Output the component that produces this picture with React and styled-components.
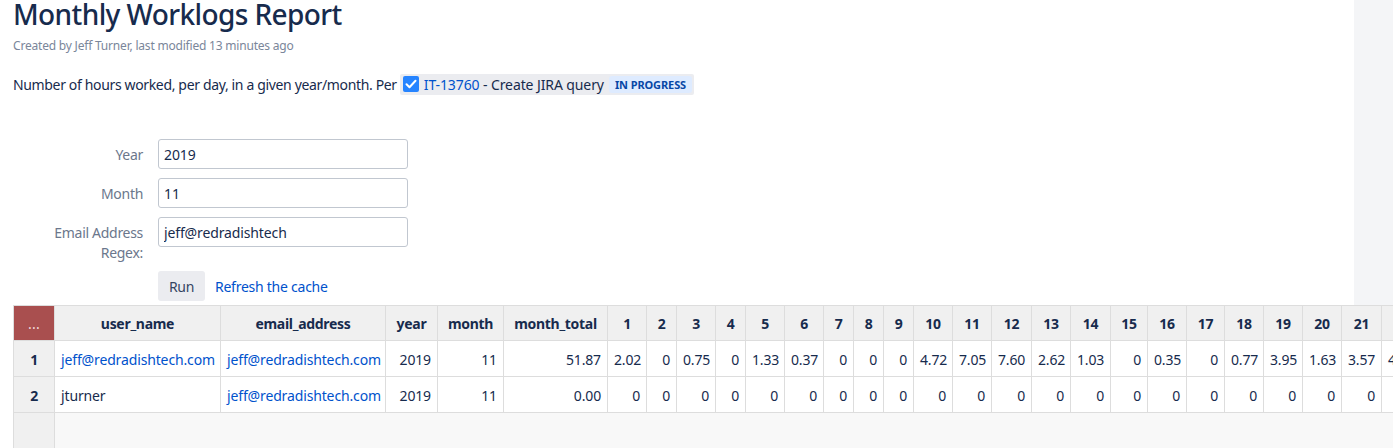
import React from 'react'
import styled, { createGlobalStyle } from 'styled-components'

const GlobalStyle = createGlobalStyle`
  html, body {
    margin: 0;
    padding: 0;
    height: 448px;
    overflow: hidden;
    background: #fff;
  }
  body {
    font-family: "Noto Sans", "Open Sans", sans-serif;
    font-size: 14px;
    color: #172b4d;
  }
`

const Page = styled.div`
  display: flex;
  width: 1393px;
  height: 448px;
  overflow: hidden;
`

const Main = styled.div`
  flex: 1;
  min-width: 0;
  padding-left: 13px;
`

const Sidebar = styled.div`
  flex: 0 0 39px;
  height: 305px;
  background: #f4f5f7;
`

const Title = styled.h1`
  margin: 0;
  height: 29px;
  font-size: 28px;
  line-height: 29px;
  font-weight: 500;
  color: #172b4d;
  letter-spacing: -0.6px;
`

const Meta = styled.div`
  margin-top: 9px;
  height: 16px;
  font-size: 12px;
  line-height: 16px;
  color: #7a869a;
  letter-spacing: -0.2px;
`

const Intro = styled.div`
  margin-top: 18px;
  height: 24px;
  display: flex;
  align-items: center;
  font-size: 14px;
  letter-spacing: -0.35px;
  white-space: nowrap;
`

const SmartLink = styled.span`
  display: inline-flex;
  align-items: center;
  height: 21px;
  margin-left: 3px;
  padding: 0 2px 0 3px;
  background: #ebecf0;
  border-radius: 2px;
  letter-spacing: -0.1px;
`

const IssueIcon = styled.svg`
  width: 16px;
  height: 16px;
  margin-right: 5px;
`

const Link = styled.a`
  color: #0052cc;
  text-decoration: none;
`

const Lozenge = styled.span`
  margin-left: 5px;
  padding: 0 6px;
  height: 17px;
  line-height: 17px;
  font-size: 11px;
  font-weight: 700;
  letter-spacing: -0.1px;
  color: #0747a6;
  background: #deebff;
  border-radius: 3px;
`

const Form = styled.form`
  margin-top: 43px;
  display: grid;
  grid-template-columns: 130px 250px;
  column-gap: 15px;
  row-gap: 9px;
  align-items: start;
`

const Label = styled.label`
  padding-top: 6px;
  text-align: right;
  line-height: 20px;
  color: #6b778c;
  letter-spacing: -0.3px;
`

const Input = styled.input`
  box-sizing: border-box;
  width: 250px;
  height: 30px;
  padding: 0 5px;
  border: 1px solid #c1c7d0;
  border-radius: 3px;
  background: #fff;
  font: inherit;
  letter-spacing: -0.13px;
  color: #172b4d;
  outline: none;
`

const Actions = styled.div`
  grid-column: 2;
  margin-top: -1px;
  display: flex;
  align-items: center;
  gap: 10px;
  white-space: nowrap;
  letter-spacing: -0.25px;
`

const Button = styled.button`
  width: 47px;
  height: 30px;
  padding: 0;
  border: none;
  border-radius: 3px;
  background: #ebecf0;
  color: #344563;
  font: inherit;
  letter-spacing: -0.3px;
`

const Grid = styled.table`
  margin-top: 4px;
  border-collapse: collapse;
  table-layout: fixed;
  width: ${(p) => p.$width}px;
  font-size: 14px;
  letter-spacing: -0.3px;
`

const Col = styled.col`
  width: ${(p) => p.$width}px;
`

const HeadCell = styled.th`
  height: 34px;
  padding: 0 4px;
  border: 1px solid #ddd;
  background: #f0f0f0;
  font-weight: 700;
  text-align: center;
  white-space: nowrap;
  overflow: hidden;
  color: #172b4d;
`

const RowHead = styled(HeadCell)`
  box-sizing: border-box;
  height: 36px;
  padding-top: 2px;
`

const Corner = styled(HeadCell)`
  background: #a94f4f;
  color: #f3dcdc;
  font-weight: 400;
  letter-spacing: 0.3px;
`

const Cell = styled.td`
  box-sizing: border-box;
  height: 36px;
  padding: 2px 6px 0;
  border: 1px solid #ddd;
  background: #fff;
  text-align: ${(p) => (p.$text ? 'left' : 'right')};
  letter-spacing: -0.14px;
  white-space: nowrap;
  overflow: hidden;
`

const EmptyCell = styled.td`
  box-sizing: border-box;
  height: 36px;
  border-left: 1px solid #ddd;
  background: #f8f8f8;
`

const widths = [41, 166, 165, 52, 66, 104, 39, 30, 39, 30, 39, 39, 30, 30, 30, 39, 39, 40, 39, 40, 37, 39, 38, 39, 39, 39, 40, 39]

const days = Array.from({ length: 22 }, (_, i) => String(i + 1))

const hours = ['2.02', '0', '0.75', '0', '1.33', '0.37', '0', '0', '0', '4.72', '7.05', '7.60', '2.62', '1.03', '0', '0.35', '0', '0.77', '3.95', '1.63', '3.57', '4.12']

const email = 'jeff@redradishtech.com'

const rows = [
  { id: 1, name: email, nameLink: true, total: '51.87', days: hours },
  { id: 2, name: 'jturner', nameLink: false, total: '0.00', days: days.map(() => '0') },
]

const gridWidth = widths.reduce((a, b) => a + b, 0)

export default function App() {
  return (
    <Page>
      <GlobalStyle />
      <Main>
        <Title>Monthly Worklogs Report</Title>
        <Meta>Created by Jeff Turner, last modified 13 minutes ago</Meta>
        <Intro>
          Number of hours worked, per day, in a given year/month. Per
          <SmartLink>
            <IssueIcon viewBox="0 0 16 16">
              <rect width="16" height="16" rx="2" fill="#2684ff" />
              <path d="M3.5 8.2l3 3 6-6.4" fill="none" stroke="#fff" strokeWidth="2" strokeLinecap="round" strokeLinejoin="round" />
            </IssueIcon>
            <Link href="#">IT-13760</Link>
            &nbsp;- Create JIRA query
            <Lozenge>IN PROGRESS</Lozenge>
          </SmartLink>
        </Intro>
        <Form>
          <Label>Year</Label>
          <Input defaultValue="2019" />
          <Label>Month</Label>
          <Input defaultValue="11" />
          <Label>Email Address Regex:</Label>
          <Input defaultValue="jeff@redradishtech" />
          <Actions>
            <Button type="button">Run</Button>
            <Link href="#">Refresh the cache</Link>
          </Actions>
        </Form>
        <Grid $width={gridWidth}>
          <colgroup>
            {widths.map((w, i) => (
              <Col key={i} $width={w} />
            ))}
          </colgroup>
          <thead>
            <tr>
              <Corner>...</Corner>
              {['user_name', 'email_address', 'year', 'month', 'month_total', ...days].map((h) => (
                <HeadCell key={h}>{h}</HeadCell>
              ))}
            </tr>
          </thead>
          <tbody>
            {rows.map((r) => (
              <tr key={r.id}>
                <RowHead>{r.id}</RowHead>
                <Cell $text>{r.nameLink ? <Link href="#">{r.name}</Link> : r.name}</Cell>
                <Cell $text>
                  <Link href="#">{email}</Link>
                </Cell>
                <Cell>2019</Cell>
                <Cell>11</Cell>
                <Cell>{r.total}</Cell>
                {r.days.map((d, i) => (
                  <Cell key={i}>{d}</Cell>
                ))}
              </tr>
            ))}
            <tr>
              <RowHead />
              <EmptyCell colSpan={widths.length - 1} />
            </tr>
          </tbody>
        </Grid>
      </Main>
      <Sidebar />
    </Page>
  )
}
